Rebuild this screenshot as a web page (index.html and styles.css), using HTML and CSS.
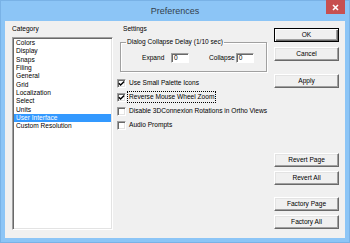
FILE: index.html
```html
<!DOCTYPE html>
<html>
<head>
<meta charset="utf-8">
<link rel="stylesheet" href="styles.css">
</head>
<body>
<div class="window">
  <div class="titlebar">
    <span class="title">Preferences</span>
    <span class="close"><svg width="7" height="7" viewBox="0 0 7 7"><path d="M1 1L6 6M6 1L1 6" stroke="#fff" stroke-width="1.6"/></svg></span>
  </div>
  <div class="client">
    <div class="col-cat">
      <div class="label">Category</div>
      <div class="listbox">
        <div class="item">Colors</div>
        <div class="item">Display</div>
        <div class="item">Snaps</div>
        <div class="item">Filing</div>
        <div class="item">General</div>
        <div class="item">Grid</div>
        <div class="item">Localization</div>
        <div class="item">Select</div>
        <div class="item">Units</div>
        <div class="item selected">User Interface</div>
        <div class="item">Custom Resolution</div>
      </div>
    </div>
    <div class="col-settings">
      <div class="label settings-label">Settings</div>
      <fieldset class="group">
        <legend>Dialog Collapse Delay (1/10 sec)</legend>
        <div class="fields">
          <span class="field-label expand-label">Expand</span><span class="input">0</span>
          <span class="field-label collapse-label">Collapse</span><span class="input">0</span>
        </div>
      </fieldset>
      <div class="checks">
        <div class="check"><span class="box"><svg width="7" height="7" viewBox="0 0 7 7"><path d="M0.8 3.2L2.6 5L6.2 1.4" fill="none" stroke="#000" stroke-width="1.4"/></svg></span><span class="ctext">Use Small Palette Icons</span></div>
        <div class="check"><span class="box"><svg width="7" height="7" viewBox="0 0 7 7"><path d="M0.8 3.2L2.6 5L6.2 1.4" fill="none" stroke="#000" stroke-width="1.4"/></svg></span><span class="ctext focus">Reverse Mouse Wheel Zoom</span></div>
        <div class="check"><span class="box"></span><span class="ctext">Disable 3DConnexion Rotations in Ortho Views</span></div>
        <div class="check"><span class="box"></span><span class="ctext">Audio Prompts</span></div>
      </div>
    </div>
    <div class="col-buttons">
      <div class="btn default">OK</div>
      <div class="btn cancel">Cancel</div>
      <div class="btn apply">Apply</div>
      <div class="btn revert-page">Revert Page</div>
      <div class="btn revert-all">Revert All</div>
      <div class="btn factory-page">Factory Page</div>
      <div class="btn factory-all">Factory All</div>
    </div>
  </div>
</div>
</body>
</html>
```

FILE: styles.css
```css
html, body {
  margin: 0;
  padding: 0;
}
body {
  width: 350px;
  height: 243px;
  overflow: hidden;
  font-family: "Liberation Sans", Arial, sans-serif;
  font-size: 6.6px;
  color: #000;
}
.window {
  width: 350px;
  height: 243px;
  box-sizing: border-box;
  background: #8cc5f6;
  border: 1px solid #79b2e6;
  display: flex;
  flex-direction: column;
}
.titlebar {
  height: 20px;
  position: relative;
  display: flex;
  align-items: center;
  justify-content: center;
}
.title {
  font-size: 9px;
  color: #33404d;
  line-height: 12px;
}
.close {
  position: absolute;
  left: 325px;
  top: -1px;
  width: 19px;
  height: 14px;
  background: #c75050;
  display: flex;
  align-items: center;
  justify-content: center;
}
.close svg { display: block; }
.client {
  flex: 1;
  margin: 0 4px 4px 4px;
  background: #f0f0f0;
  display: grid;
  grid-template-columns: 101px 153px 65px;
  column-gap: 4px;
  padding: 4px 6px 8px 7px;
  min-height: 0;
}
.label {
  line-height: 8px;
  height: 8px;
}
.col-cat {
  display: flex;
  flex-direction: column;
  min-height: 0;
}
.col-cat .label {
  margin-bottom: 4px;
}
.listbox {
  flex: 1;
  background: #fff;
  border-style: solid;
  border-width: 1px;
  border-color: #a0a0a0 #fff #fff #a0a0a0;
  box-shadow: inset 1px 1px #696969, inset -1px -1px #e3e3e3;
  padding: 1px 1px 1px 1px;
}
.item {
  line-height: 8.34px;
  height: 8.34px;
  padding-left: 2px;
  white-space: nowrap;
}
.item.selected {
  background: #3399ff;
  color: #fff;
}
.col-settings {
  display: flex;
  flex-direction: column;
}
.settings-label {
  padding-left: 6px;
  margin-bottom: 5px;
}
.group {
  margin: 0 3px 0 3px;
  padding: 7px 0 9px 0;
  border: 1px solid #a0a0a0;
  box-shadow: 1px 1px #fff, inset 1px 1px #fff;
  border-radius: 0;
}
.group legend {
  padding: 0 1px;
  margin-left: 5px;
  line-height: 8px;
}
.fields {
  display: flex;
  align-items: center;
  padding-left: 21px;
  height: 9px;
}
.field-label {
  white-space: nowrap;
  flex: none;
}
.expand-label {
  width: 29px;
}
.collapse-label {
  margin-left: 20px;
  margin-right: 1px;
}
.input {
  width: 18px;
  height: 10px;
  box-sizing: border-box;
  background: #fff;
  border-style: solid;
  border-width: 1px;
  border-color: #a0a0a0 #fff #fff #a0a0a0;
  box-shadow: inset 1px 1px #696969;
  line-height: 8px;
  padding-left: 2px;
  flex: none;
}
.checks {
  margin-top: 4px;
  display: flex;
  flex-direction: column;
}
.check {
  height: 14px;
  display: flex;
  align-items: center;
}
.box {
  width: 9px;
  height: 9px;
  box-sizing: border-box;
  background: #fff;
  border-style: solid;
  border-width: 1px;
  border-color: #a0a0a0 #fff #fff #a0a0a0;
  box-shadow: inset 1px 1px #696969, inset -1px -1px #e3e3e3;
  display: flex;
  align-items: center;
  justify-content: center;
  flex: none;
}
.box svg { display: block; }
.ctext {
  margin-left: 3px;
  white-space: nowrap;
  line-height: 8px;
}
.ctext.focus {
  outline: 1px dotted #000;
  outline-offset: 1px;
}
.col-buttons {
  display: flex;
  flex-direction: column;
  padding-top: 3px;
  padding-bottom: 1px;
}
.btn {
  height: 14px;
  box-sizing: border-box;
  background: #f0f0f0;
  border: 1px solid;
  border-color: #fff #696969 #696969 #fff;
  box-shadow: inset -1px -1px #a0a0a0, inset 1px 1px #e3e3e3;
  display: flex;
  align-items: center;
  justify-content: center;
  line-height: 8px;
  flex: none;
}
.btn.default {
  border-color: #000;
  box-shadow: inset 1px 1px #fff, inset -1px -1px #696969, inset -2px -2px #a0a0a0;
}
.cancel { margin-top: 5px; }
.apply { margin-top: 13px; }
.revert-page { margin-top: auto; }
.revert-all { margin-top: 4px; }
.factory-page { margin-top: 12px; }
.factory-all { margin-top: 4px; }
```
